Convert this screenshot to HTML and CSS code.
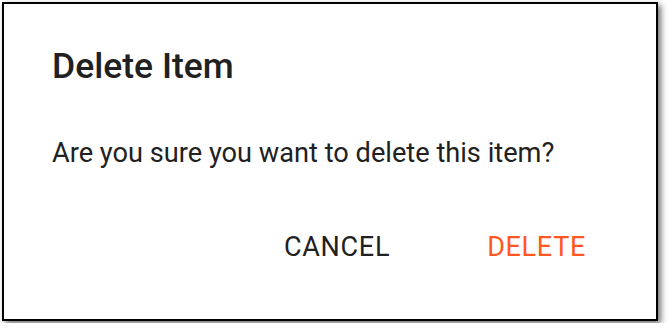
FILE: index.html
```html
<!DOCTYPE html>
<html>
<head>
<meta charset="utf-8">
<link rel="stylesheet" href="styles.css">
</head>
<body>
<div class="dialog">
  <h2 class="title">Delete Item</h2>
  <p class="message">Are you sure you want to delete this item?</p>
  <div class="actions">
    <button class="btn">CANCEL</button>
    <button class="btn danger">DELETE</button>
  </div>
</div>
</body>
</html>
```
FILE: styles.css
```css
html, body { margin: 0; padding: 0; background: #fff; }
body { padding: 2px; font-family: Roboto, "Noto Sans", sans-serif; }
.dialog {
  width: 652px;
  height: 315px;
  border: 2px solid #000;
  background: #fff;
  box-shadow: 3px 3px 6px rgba(0,0,0,0.55);
  box-sizing: content-box;
  display: flex;
  flex-direction: column;
}
.title {
  margin: 0;
  padding: 42px 48px 0 48px;
  font-size: 35.5px;
  font-weight: 500;
  line-height: 40px;
  color: #212121;
}
.message {
  margin: 0;
  padding: 49px 48px 0 48px;
  font-size: 27.2px;
  line-height: 36px;
  color: #212121;
}
.actions {
  display: flex;
  justify-content: flex-end;
  gap: 65px;
  padding: 52px 54px 0 0;
}
.btn {
  border: 0;
  background: none;
  font-family: inherit;
  font-size: 27px;
  letter-spacing: 0.7px;
  color: #212121;
  padding: 8px 16px;
  line-height: 32px;
}
.danger { color: #ff5722; }
```
